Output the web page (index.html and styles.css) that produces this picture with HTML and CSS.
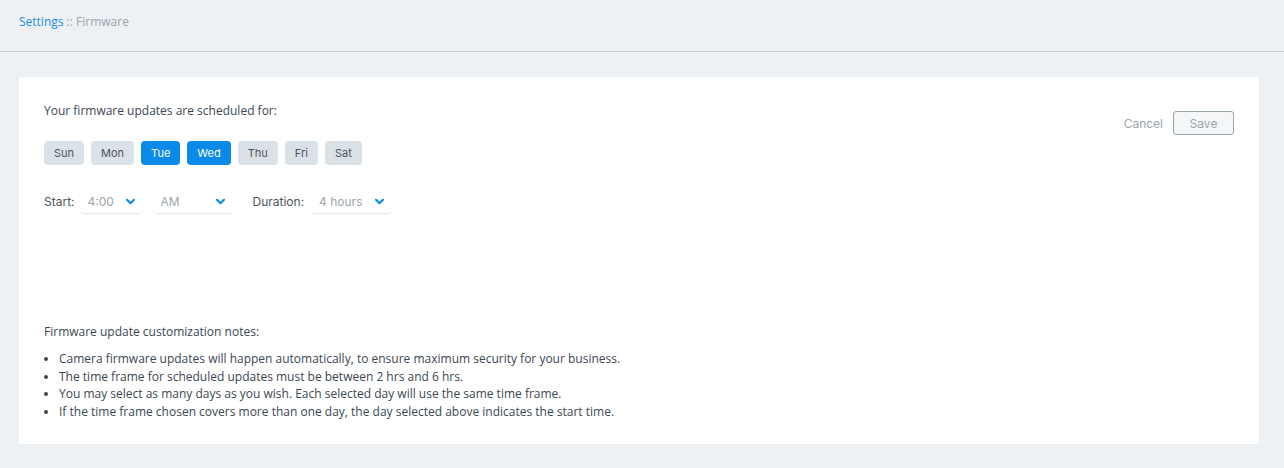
FILE: index.html
```html
<!DOCTYPE html>
<html>
<head>
<meta charset="utf-8">
<link rel="stylesheet" href="styles.css">
</head>
<body>
<header class="topbar">
  <span class="crumb-link">Settings</span><span class="crumb-sep"> :: </span><span class="crumb-current">Firmware</span>
</header>
<main class="content">
  <section class="card">
    <div class="card-top">
      <div class="schedule">
        <p class="intro">Your firmware updates are scheduled for:</p>
        <div class="days">
          <button class="day">Sun</button>
          <button class="day">Mon</button>
          <button class="day active">Tue</button>
          <button class="day active">Wed</button>
          <button class="day">Thu</button>
          <button class="day">Fri</button>
          <button class="day">Sat</button>
        </div>
        <div class="times">
          <span class="label">Start:</span>
          <div class="select s-hour"><span class="val">4:00</span><svg class="chev" viewBox="0 0 12 8"><path d="M2 2 L6 6 L10 2" /></svg></div>
          <div class="select s-ampm"><span class="val">AM</span><svg class="chev" viewBox="0 0 12 8"><path d="M2 2 L6 6 L10 2" /></svg></div>
          <span class="label label-dur">Duration:</span>
          <div class="select s-dur"><span class="val">4 hours</span><svg class="chev" viewBox="0 0 12 8"><path d="M2 2 L6 6 L10 2" /></svg></div>
        </div>
      </div>
      <div class="actions">
        <button class="cancel">Cancel</button>
        <button class="save">Save</button>
      </div>
    </div>
    <div class="notes">
      <p class="notes-title">Firmware update customization notes:</p>
      <ul class="notes-list">
        <li>Camera firmware updates will happen automatically, to ensure maximum security for your business.</li>
        <li>The time frame for scheduled updates must be between 2 hrs and 6 hrs.</li>
        <li>You may select as many days as you wish. Each selected day will use the same time frame.</li>
        <li>If the time frame chosen covers more than one day, the day selected above indicates the start time.</li>
      </ul>
    </div>
  </section>
</main>
</body>
</html>
```
FILE: styles.css
```css
* { box-sizing: border-box; }
html, body { margin: 0; padding: 0; }
body {
  background: #edf1f4;
  font-family: "Open Sans", "Liberation Sans", sans-serif;
  color: #3b4754;
  width: 1284px;
  height: 468px;
  overflow: hidden;
}
.topbar {
  height: 52px;
  border-bottom: 1px solid #c9d1d6;
  padding: 14px 0 0 19px;
  font-size: 12px;
  line-height: 16px;
}
.crumb-link { color: #1a8fe3; }
.crumb-sep, .crumb-current { color: #98a4ad; }
.content {
  padding: 25px 25px 0 19px;
}
.card {
  background: #fff;
  width: 1240px;
  height: 367px;
  padding: 26px 25px 0 25px;
  display: flex;
  flex-direction: column;
}
.card-top {
  display: flex;
  justify-content: space-between;
  align-items: flex-start;
  height: 221px;
}
.intro {
  margin: 0;
  font-size: 12px;
  line-height: 16px;
}
.days {
  display: flex;
  gap: 7px;
  margin-top: 22px;
}
.day {
  font-family: "Inter", "Liberation Sans", sans-serif;
  font-size: 11px;
  font-weight: 400;
  height: 24px;
  padding: 0 10px;
  border: none;
  border-radius: 4px;
  background: #dae1e7;
  color: #4a5662;
  line-height: 24px;
}
.day.active {
  background: #0a8ae8;
  color: #fff;
}
.times {
  display: flex;
  align-items: center;
  margin-top: 24px;
  font-family: "Inter", "Liberation Sans", sans-serif;
  font-size: 12px;
}
.label { color: #4a5662; margin-right: 6px; }
.label-dur { margin-left: 21px; margin-right: 8px; }
.select {
  height: 24px;
  display: flex;
  align-items: center;
  justify-content: space-between;
  padding: 0 6px 0 7px;
  border-radius: 3px;
  box-shadow: 0 1px 1px rgba(40, 60, 80, 0.12);
}
.val { color: #9ba6af; }
.s-hour { width: 61px; margin-right: 12px; }
.s-ampm { width: 78px; }
.s-dur { width: 79px; }
.chev {
  width: 11px;
  height: 7px;
  fill: none;
  stroke: #0a8ae8;
  stroke-width: 2.4;
  stroke-linecap: round;
  stroke-linejoin: round;
}
.actions {
  display: flex;
  align-items: center;
  gap: 10px;
  margin-top: 8px;
}
.cancel {
  background: none;
  border: none;
  padding: 0;
  font-family: "Inter", "Liberation Sans", sans-serif;
  font-size: 12px;
  color: #9aa6af;
}
.save {
  width: 61px;
  height: 24px;
  border: 1px solid #98a6ae;
  border-radius: 3px;
  background: #f4f6f8;
  font-family: "Inter", "Liberation Sans", sans-serif;
  font-size: 12px;
  color: #9aa6af;
}
.notes-title {
  margin: 0;
  font-size: 12px;
  line-height: 16px;
}
.notes-list {
  margin: 10px 0 0 0;
  padding-left: 15px;
  font-size: 12px;
  line-height: 17.7px;
}
```
